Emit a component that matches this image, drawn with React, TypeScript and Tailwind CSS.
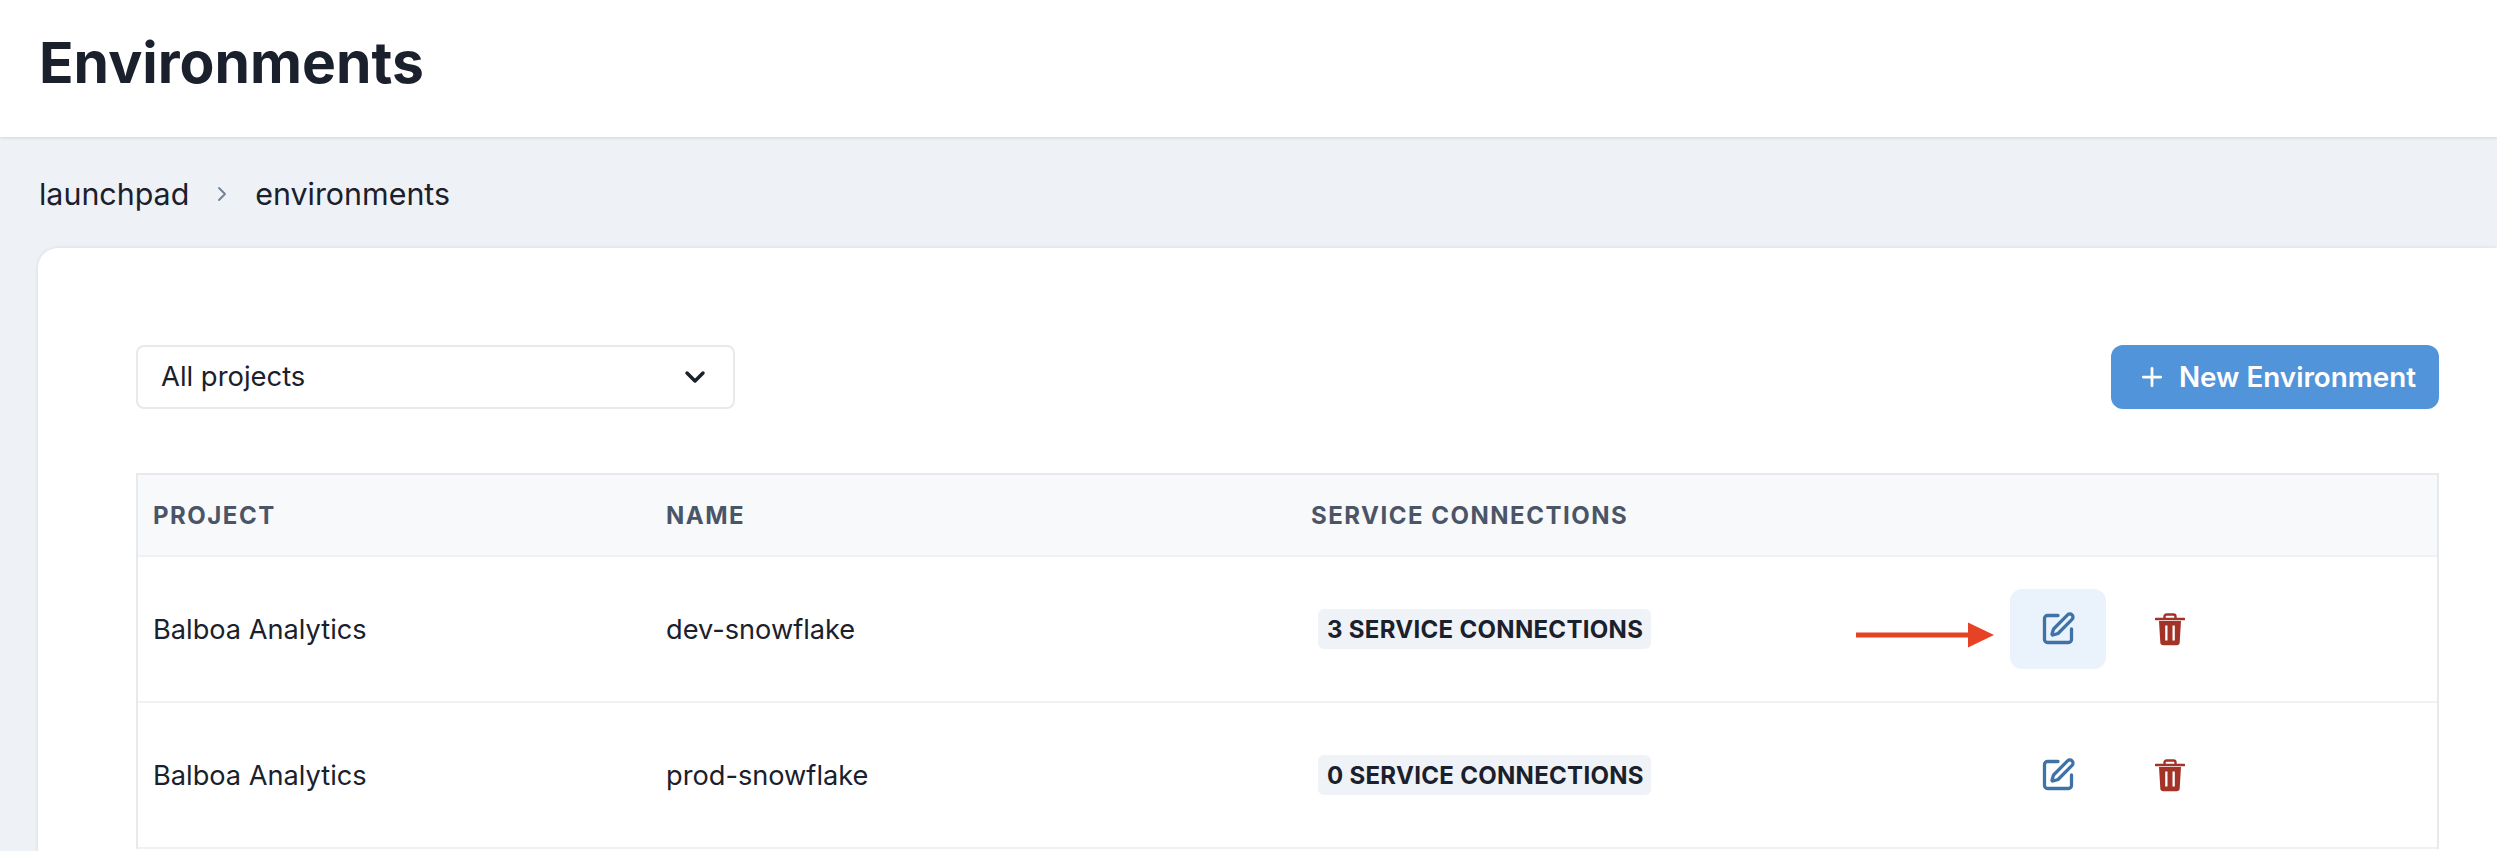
import { ChevronDown, ChevronRight, Plus, SquarePen } from "lucide-react";
import clsx from "clsx";

const rows = [
  { project: "Balboa Analytics", name: "dev-snowflake", connections: 3, active: true },
  { project: "Balboa Analytics", name: "prod-snowflake", connections: 0, active: false },
];

// Filled bin with the cut-out slats, same shape as the delete icon in the table
function TrashIcon() {
  return (
    <svg width="30" height="33" viewBox="0 0 30 33" className="text-[#a33327]" fill="none">
      <path d="M1 6h28" stroke="currentColor" strokeWidth="2.6" strokeLinecap="round" />
      <path d="M9.5 6V3.5a2 2 0 0 1 2-2h7a2 2 0 0 1 2 2V6" stroke="currentColor" strokeWidth="2.4" />
      <path
        fillRule="evenodd"
        clipRule="evenodd"
        d="M4 8h22l-1.3 21.5a3 3 0 0 1-3 2.8H8.300a3 3 0 0 1-3-2.800L4 8Zm6.200 4.500h2.300v15h-2.300v-15Zm7.300 0h2.300v15h-2.300v-15Z"
        fill="currentColor"
      />
    </svg>
  );
}

function RedArrow() {
  return (
    <svg width="140" height="26" viewBox="0 0 140 26" className="absolute left-[-155px] top-[33px]">
      <path d="M1 10.500h114v5H1z" fill="#e64326" />
      <path d="M113 0.500 139 13 113 25.500z" fill="#e64326" />
    </svg>
  );
}

export default function App() {
  return (
    <div className="h-[851px] w-full overflow-hidden bg-[#eef1f6] font-['Inter',sans-serif] text-[#1a202c]">
      {/* Page title */}
      <header className="flex h-[137px] items-start bg-white pl-[39px] pt-[30px] shadow-[0_1px_3px_rgba(0,0,0,0.12)]">
        <h1 className="text-[57px] leading-[66px] font-bold">Environments</h1>
      </header>

      {/* Breadcrumb */}
      <nav className="flex h-[111px] items-center pl-[39px] pt-[2px] text-[30.400px] leading-10">
        <span>launchpad</span>
        <ChevronRight className="mx-[21px] size-[24px] text-[#718096]" strokeWidth={1.8} />
        <span>environments</span>
      </nav>

      <main className="ml-[38px] h-[700px] rounded-tl-[20px] bg-white pl-[98px] pr-[58px] pt-[97px] shadow-[0_0_4px_rgba(0,0,0,0.1)]">
        <div className="flex items-center justify-between">
          <div className="flex h-[64px] w-[599px] items-center justify-between rounded-lg border-2 border-[#e7e9ed] pl-[23px] pr-[22px] text-[27.400px]">
            <span>All projects</span>
            <ChevronDown className="size-8" strokeWidth={2.6} />
          </div>
          <button className="flex h-[64px] w-[328px] items-center gap-[12px] rounded-xl bg-[#5294d9] pl-[26px] text-[27.800px] font-semibold text-white">
            <Plus className="size-[30px]" strokeWidth={2.2} />
            <span className="pt-[2px]">New Environment</span>
          </button>
        </div>

        <div className="mt-[64px] border-x-2 border-t-2 border-[#e7e9ed]">
          <div className="grid h-[82px] grid-cols-[512px_645px_1fr] items-center border-b-2 border-[#eff1f4] bg-[#f8f9fb] pt-[2px] text-[24px] font-bold tracking-[1.5px] text-[#4a5568]">
            <div className="pl-[15px]">PROJECT</div>
            <div className="pl-4">NAME</div>
            <div className="pl-4">SERVICE CONNECTIONS</div>
          </div>
          {rows.map(row => (
            <div
              key={row.name}
              className="grid h-[146px] grid-cols-[512px_645px_715px_1fr] items-center border-b-2 border-[#eff1f4] text-[27.200px]"
            >
              <div className="pl-[15px] pt-[2px]">{row.project}</div>
              <div className="pl-4 pt-[2px]">{row.name}</div>
              <div className="pl-[23px]">
                <span className="inline-block h-10 w-[333px] rounded-md bg-[#eff2f6] pl-[9px] pt-[1px] text-[24px] leading-10 font-bold tracking-[0.3px] whitespace-nowrap">
                  {row.connections} SERVICE CONNECTIONS
                </span>
              </div>
              <div className="relative flex items-center gap-4">
                {row.active && <RedArrow />}
                <button
                  className={clsx(
                    "flex h-20 w-24 items-center justify-center rounded-xl text-[#3f72a6]",
                    row.active && "bg-[#eaf3fb]"
                  )}
                >
                  <SquarePen className="size-[36px]" strokeWidth={2.2} />
                </button>
                <button className="flex h-20 w-24 items-center justify-center">
                  <TrashIcon />
                </button>
              </div>
            </div>
          ))}
        </div>
      </main>
    </div>
  );
}
